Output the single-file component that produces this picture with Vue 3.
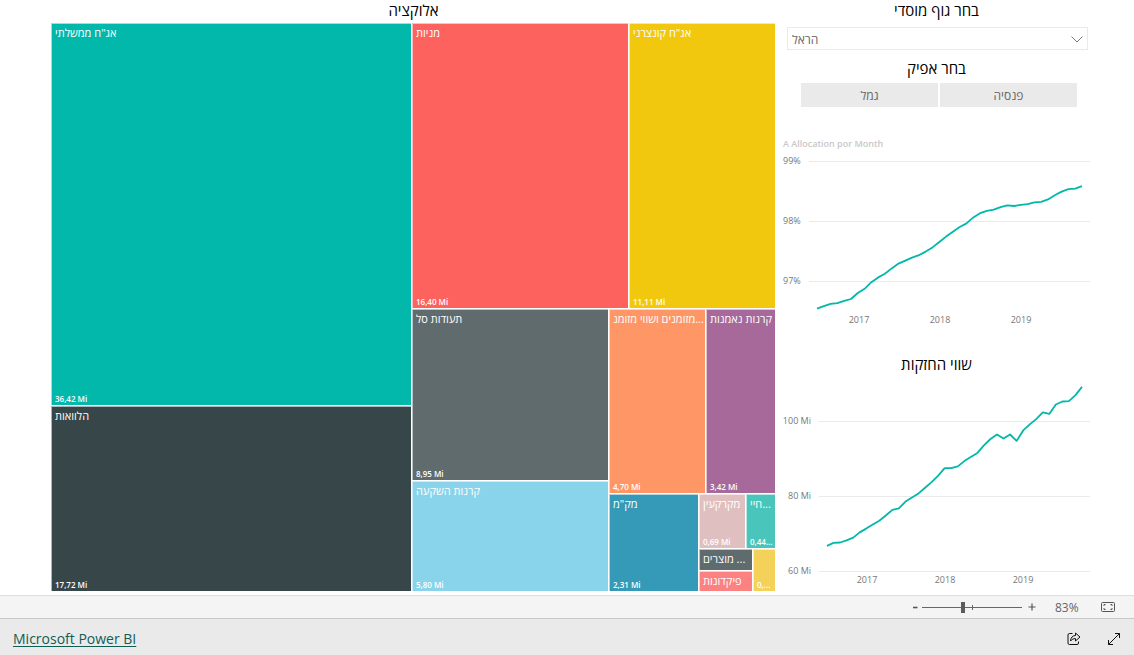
<script setup>
import { ref } from 'vue'

const institution = ref('הראל')
const zoom = ref(41)

const tiles = [
  { area: 'gov', name: 'אג"ח ממשלתי', value: '36,42 Mi' },
  { area: 'loans', name: 'הלוואות', value: '17,72 Mi' },
  { area: 'stocks', name: 'מניות', value: '16,40 Mi' },
  { area: 'corp', name: 'אג"ח קונצרני', value: '11,11 Mi' },
  { area: 'etf', name: 'תעודות סל', value: '8,95 Mi' },
  { area: 'invest', name: 'קרנות השקעה', value: '5,80 Mi' },
  { area: 'cash', name: 'מזומנים ושווי מזומנ...', value: '4,70 Mi' },
  { area: 'mutual', name: 'קרנות נאמנות', value: '3,42 Mi' },
  { area: 'makam', name: 'מק"מ', value: '2,31 Mi' },
  { area: 'land', name: 'מקרקעין', value: '0,69 Mi' },
  { area: 'life', name: 'חיי...', value: '0,44...' },
  { area: 'products', name: 'מוצרים ...', value: '' },
  { area: 'deposits', name: 'פיקדונות', value: '' },
  { area: 'other', name: '', value: '0,...' }
]

const channels = ['גמל', 'פנסיה']

const allocation = [
  96.54, 96.58, 96.62, 96.63, 96.67, 96.7, 96.8, 96.87, 96.98, 97.06, 97.12, 97.21, 97.29, 97.34,
  97.39, 97.43, 97.49, 97.56, 97.65, 97.74, 97.82, 97.9, 97.96, 98.06, 98.13, 98.17, 98.19, 98.23,
  98.26, 98.25, 98.27, 98.28, 98.31, 98.32, 98.36, 98.43, 98.49, 98.53, 98.54, 98.58
]
const holdings = [
  66.7, 67.5, 67.6, 68.2, 68.9, 70.3, 71.3, 72.4, 73.4, 74.8, 76.3, 76.7, 78.5, 79.6, 80.7, 82.2,
  83.7, 85.4, 87.4, 87.4, 87.9, 89.3, 90.4, 91.5, 93.5, 95.2, 96.4, 95.3, 96.4, 94.7, 97.5, 99.1,
  100.5, 102.3, 101.9, 104.4, 105.2, 105.3, 106.9, 109.1
]

function line(values, left, right, y) {
  const step = (right - left) / (values.length - 1)
  return values.map((v, i) => `${(left + i * step).toFixed(1)},${y(v).toFixed(1)}`).join(' ')
}

const charts = {
  allocation: {
    points: line(allocation, 34, 299, (v) => 9 + (99 - v) * 60),
    rows: [{ t: '99%', y: 9 }, { t: '98%', y: 69 }, { t: '97%', y: 129 }],
    years: [{ t: '2017', x: 76 }, { t: '2018', x: 157 }, { t: '2019', x: 238 }]
  },
  holdings: {
    points: line(holdings, 44, 299, (v) => 41 + (100 - v) * 3.75),
    rows: [{ t: '100 Mi', y: 41 }, { t: '80 Mi', y: 116 }, { t: '60 Mi', y: 191 }],
    years: [{ t: '2017', x: 84 }, { t: '2018', x: 162 }, { t: '2019', x: 240 }]
  }
}
</script>

<template>
  <div class="page">
    <main class="report">
      <section class="allocation">
        <h2 class="title">אלוקציה</h2>
        <div class="treemap">
          <div v-for="t in tiles" :key="t.area" class="tile" :class="t.area">
            <span class="name">{{ t.name }}</span>
            <span v-if="t.value" class="value">{{ t.value }}</span>
          </div>
        </div>
      </section>

      <aside class="side">
        <label class="title" for="institution">בחר גוף מוסדי</label>
        <div class="picker">
          <select id="institution" v-model="institution">
            <option>הראל</option>
          </select>
          <svg class="chevron" viewBox="0 0 12 7" aria-hidden="true"><path d="M.5 .5 6 6 11.5 .5" /></svg>
        </div>

        <h2 class="title channel-title">בחר אפיק</h2>
        <div class="channels">
          <button v-for="c in channels" :key="c" type="button">{{ c }}</button>
        </div>

        <h3 class="subtitle">A Allocation por Month</h3>
        <svg class="chart" viewBox="0 0 307 178" role="img" aria-label="A Allocation por Month">
          <g v-for="r in charts.allocation.rows" :key="r.t">
            <line class="grid" x1="26" x2="307" :y1="r.y + 0.5" :y2="r.y + 0.5" />
            <text x="0" :y="r.y + 3">{{ r.t }}</text>
          </g>
          <text v-for="y in charts.allocation.years" :key="y.t" class="mid" :x="y.x" y="171">{{ y.t }}</text>
          <polyline class="series" :points="charts.allocation.points" />
        </svg>

        <h2 class="title holdings-title">שווי החזקות</h2>
        <svg class="chart" viewBox="0 0 307 211" role="img" aria-label="שווי החזקות">
          <g v-for="r in charts.holdings.rows" :key="r.t">
            <line class="grid" x1="36" x2="307" :y1="r.y + 0.5" :y2="r.y + 0.5" />
            <text class="end" x="28" :y="r.y + 3">{{ r.t }}</text>
          </g>
          <text v-for="y in charts.holdings.years" :key="y.t" class="mid" :x="y.x" y="203">{{ y.t }}</text>
          <polyline class="series" :points="charts.holdings.points" />
        </svg>
      </aside>
    </main>

    <div class="zoombar">
      <button type="button" class="step" aria-label="Zoom out">
        <svg viewBox="0 0 10 10"><path d="M3 5.500h4.500" stroke-width="1.600" /></svg>
      </button>
      <div class="slider">
        <input v-model="zoom" type="range" min="0" max="100" aria-label="Zoom" />
      </div>
      <button type="button" class="step" aria-label="Zoom in">
        <svg viewBox="0 0 10 10"><path d="M1.500 5h7M5 1.500v7" stroke-width="1.200" /></svg>
      </button>
      <span class="percent">83%</span>
      <button type="button" class="fit" aria-label="Fit to page">
        <svg viewBox="0 0 15 11">
          <rect x=".5" y=".5" width="13" height="9" rx="1" />
          <path d="M3 4V2.500h1.500M9.500 2.500H11V4M11 6v1.500H9.500M4.500 7.500H3V6" />
        </svg>
      </button>
    </div>

    <footer class="footer">
      <a href="#">Microsoft Power BI</a>
      <div class="actions">
        <button type="button" aria-label="Share">
          <svg viewBox="0 0 14 14">
            <path d="M5.500 1.500h-3a1.500 1.500 0 0 0-1.500 1.500v8a1.500 1.500 0 0 0 1.500 1.500h7.500a1.500 1.500 0 0 0 1.500-1.500v-1.500" />
            <path d="M8.500 1v2.500C5.500 3.600 3.800 5.500 3.500 9 5 7.200 6.500 6.600 8.500 6.600V9L13 5z" />
          </svg>
        </button>
        <button type="button" aria-label="Full screen">
          <svg viewBox="0 0 14 14"><path d="M1.500 12.500l11-11M8 1.500h4.500V6M1.500 8v4.500H6" /></svg>
        </button>
      </div>
    </footer>
  </div>
</template>

<style>
body {
  margin: 0;
  background: #fff;
}
</style>

<style scoped>
.page {
  min-height: 100vh;
  display: flex;
  flex-direction: column;
  font-family: "Open Sans", "Noto Sans", "DejaVu Sans", sans-serif;
  color: #000;
}
button {
  border: 0;
  padding: 0;
  background: none;
  font: inherit;
  color: inherit;
}
svg {
  display: block;
}
.report {
  flex: 1;
  display: flex;
  gap: 7px;
  padding: 0 44px 3px 51px;
}
.allocation {
  flex: 725 1 0;
  min-width: 0;
  display: flex;
  flex-direction: column;
}
.side {
  flex: 307 1 0;
  min-width: 0;
  display: flex;
  flex-direction: column;
}
.title {
  display: block;
  margin: 0;
  height: 23px;
  line-height: 20px;
  font-size: 15px;
  font-weight: 400;
  text-align: center;
}

/* Treemap */
.treemap {
  flex: 1;
  display: grid;
  grid-template-columns:
    minmax(0, 361fr) minmax(0, 197fr) minmax(0, 20fr) minmax(0, 70fr)
    minmax(0, 7fr) minmax(0, 40fr) minmax(0, 7fr) minmax(0, 23fr);
  grid-template-rows:
    minmax(0, 286fr) minmax(0, 97fr) minmax(0, 75fr) minmax(0, 13fr)
    minmax(0, 55fr) minmax(0, 22fr) minmax(0, 21fr);
}
.tile {
  display: flex;
  flex-direction: column;
  justify-content: space-between;
  overflow: hidden;
  margin: 0 1px 1px 0;
  padding: 2px 3px 0;
  border: solid rgba(255, 255, 255, 0.6);
  border-width: 1px 0 0 1px;
  color: #fff;
  white-space: nowrap;
}
.name {
  font-size: 11px;
  line-height: 14px;
}
.value {
  font-size: 8px;
  line-height: 12px;
  font-weight: 600;
}
.gov { grid-area: 1 / 1 / 3 / 2; background: #01b8aa; }
.loans { grid-area: 3 / 1 / 8 / 2; background: #374649; }
.stocks { grid-area: 1 / 2 / 2 / 4; background: #fd625e; }
.corp { grid-area: 1 / 4 / 2 / 9; background: #f2c80f; }
.etf { grid-area: 2 / 2 / 4 / 3; background: #5f6b6d; }
.invest { grid-area: 4 / 2 / 8 / 3; background: #8ad4eb; }
.cash { grid-area: 2 / 3 / 5 / 6; background: #fe9666; }
.mutual { grid-area: 2 / 6 / 5 / 9; background: #a66999; }
.makam { grid-area: 5 / 3 / 8 / 5; background: #3599b8; }
.land { grid-area: 5 / 5 / 6 / 7; background: #dfbfbf; }
.life { grid-area: 5 / 7 / 6 / 9; background: #4ac5bb; }
.products { grid-area: 6 / 5 / 7 / 8; background: #5f6b6d; }
.deposits { grid-area: 7 / 5 / 8 / 8; background: #fb8281; }
.other { grid-area: 6 / 8 / 8 / 9; background: #f4d25a; justify-content: flex-end; }

/* Filters */
.picker {
  position: relative;
  margin: 4px 2px 0 4px;
}
.picker select {
  display: block;
  width: 100%;
  height: 23px;
  padding: 1px 24px 0 4px;
  border: 1px solid #eaeaea;
  border-radius: 0;
  appearance: none;
  background: #fff;
  color: #666;
  font: 12px "Open Sans", "Noto Sans", sans-serif;
}
.chevron {
  position: absolute;
  right: 5px;
  top: 9px;
  width: 12px;
  height: 7px;
  fill: none;
  stroke: #777;
  pointer-events: none;
}
.channel-title {
  margin-top: 8px;
  height: 25px;
}
.channels {
  display: flex;
  gap: 2px;
  margin: 0 13px 0 18px;
}
.channels button {
  flex: 1;
  height: 24px;
  background: #eaeaea;
  color: #666;
  font-size: 12px;
}

/* Charts */
.subtitle {
  margin: 30px 0 0;
  height: 15px;
  line-height: 14px;
  font-size: 9px;
  font-weight: 600;
  color: #c8c8c8;
}
.chart {
  width: 100%;
}
.chart text {
  font-size: 9px;
  fill: #777;
}
.chart .mid {
  text-anchor: middle;
}
.chart .end {
  text-anchor: end;
}
.grid {
  stroke: #eaeaea;
}
.series {
  fill: none;
  stroke: #01b8aa;
  stroke-width: 1.800;
  stroke-linejoin: round;
}
.holdings-title {
  margin-top: 24px;
  height: 26px;
}

/* Zoom bar */
.zoombar {
  display: flex;
  align-items: center;
  justify-content: flex-end;
  height: 22px;
  padding-right: 18px;
  border-top: 1px solid #dedede;
  background: #f4f4f4;
  color: #666;
}
.step svg {
  width: 10px;
  height: 10px;
  stroke: #555;
}
.slider {
  position: relative;
  width: 100px;
  margin: 0 5px 0 2px;
}
.slider::after {
  content: "";
  position: absolute;
  left: 50px;
  top: 9px;
  width: 1px;
  height: 5px;
  background: #666;
}
.slider input {
  display: block;
  width: 100%;
  height: 22px;
  margin: 0;
  appearance: none;
  background: linear-gradient(#666, #666) center / 100% 1px no-repeat;
}
.slider input::-webkit-slider-thumb {
  appearance: none;
  width: 4px;
  height: 11px;
  background: #5c5c5c;
}
.percent {
  width: 64px;
  box-sizing: border-box;
  padding-left: 18px;
  font-size: 12px;
}
.fit svg {
  width: 15px;
  height: 11px;
  fill: none;
  stroke: #555;
}

/* Footer */
.footer {
  display: flex;
  align-items: center;
  justify-content: space-between;
  height: 36px;
  padding: 0 13px;
  border-top: 1px solid #c8c8c8;
  background: #eaeaea;
}
.footer a {
  margin-top: 4px;
  font-size: 14px;
  line-height: 20px;
  color: #0f5e56;
  text-decoration: underline;
  text-underline-offset: 2px;
}
.actions {
  display: flex;
  gap: 26px;
  padding-top: 3px;
}
.actions svg {
  width: 14px;
  height: 14px;
  fill: none;
  stroke: #111;
}
</style>
